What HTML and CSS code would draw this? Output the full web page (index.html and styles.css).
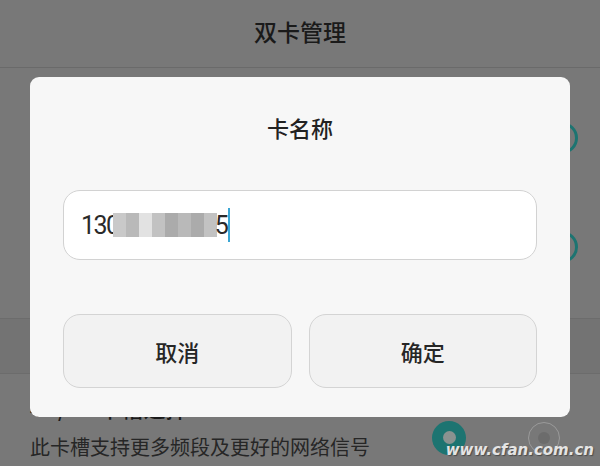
FILE: index.html
```html
<!DOCTYPE html>
<html lang="zh-CN">
<head>
    <meta charset="UTF-8">
    <meta name="viewport" content="width=device-width, initial-scale=1.0">
    <title>双卡管理</title>
    <link rel="stylesheet" href="styles.css">
</head>
<body>
    <div class="page">
        <div class="header">双卡管理</div>

        <div class="row row-first">
            <span class="row-label">卡 1</span>
            <span class="radio-ring"></span>
        </div>
        <div class="row row-second">
            <span class="row-label">卡 2</span>
            <span class="radio-ring"></span>
        </div>

        <div class="section"></div>

        <div class="slot-row">
            <div class="slot-text">
                <div class="slot-title">4G/3G 卡槽选择</div>
                <div class="slot-sub">此卡槽支持更多频段及更好的网络信号</div>
            </div>
            <div class="slot-radios">
                <span class="radio-on"><span class="dot"></span></span>
                <span class="radio-off"><span class="dot"></span></span>
            </div>
        </div>
    </div>

    <div class="dialog">
        <div class="dialog-title">卡名称</div>
        <div class="name-input">
            <span class="digits">130</span><span class="blur"><i class="b4"></i><i class="b1"></i><i class="b2"></i><i class="b5"></i><i class="b3"></i><i class="b1"></i><i class="b3"></i><i class="b5"></i></span><span class="digits">5</span><span class="caret"></span>
        </div>
        <div class="dialog-buttons">
            <button class="btn">取消</button>
            <button class="btn">确定</button>
        </div>
    </div>

    <div class="watermark">www.cfan.com.cn</div>
</body>
</html>
```

FILE: styles.css
```css
* {
    margin: 0;
    padding: 0;
    box-sizing: border-box;
}

html, body {
    width: 600px;
    height: 466px;
    overflow: hidden;
    background: #787878;
    font-family: "Noto Sans CJK SC", "Noto Sans", sans-serif;
    color: #1a1a1a;
}

.page {
    width: 600px;
}

.header {
    height: 68px;
    line-height: 62px;
    text-align: center;
    font-size: 23px;
    font-weight: 500;
    border-bottom: 1px solid #6a6a6a;
}

.row {
    display: flex;
    justify-content: space-between;
    align-items: center;
    padding: 0 22px 0 30px;
}

.row-first {
    height: 140px;
}

.row-second {
    height: 110px;
    align-items: flex-start;
    padding-top: 23px;
}

.row-label {
    font-size: 20px;
}

.radio-ring {
    width: 32px;
    height: 32px;
    border-radius: 50%;
    border: 3px solid #1d7471;
}

.section {
    height: 56px;
    background: #737373;
    border-top: 1px solid #6c6c6c;
    border-bottom: 1px solid #6c6c6c;
}

.slot-row {
    display: flex;
    justify-content: space-between;
    padding: 18px 40px 0 30px;
}

.slot-title {
    font-size: 22px;
    font-weight: 500;
    line-height: 30px;
}

.slot-sub {
    font-size: 20px;
    line-height: 30px;
    margin-top: 10px;
    color: #262626;
}

.slot-radios {
    display: flex;
    align-items: center;
    gap: 62px;
    padding-top: 19px;
    height: 72px;
}

.radio-on {
    width: 34px;
    height: 34px;
    border-radius: 50%;
    background: #1d7471;
    display: flex;
    justify-content: center;
    align-items: center;
}

.radio-on .dot {
    width: 13px;
    height: 13px;
    border-radius: 50%;
    background: #8a9290;
}

.radio-off {
    width: 32px;
    height: 32px;
    border-radius: 50%;
    border: 1px solid #9a9a9a;
    display: flex;
    justify-content: center;
    align-items: center;
}

.radio-off .dot {
    width: 12px;
    height: 12px;
    border-radius: 50%;
    background: #6c6c6c;
}

/* dialog lies over the dimmed page */
.dialog {
    position: absolute;
    left: 30px;
    top: 77px;
    width: 540px;
    height: 340px;
    background: #f7f7f7;
    border-radius: 9px;
    padding: 0 33px;
}

.dialog-title {
    text-align: center;
    font-size: 22px;
    font-weight: 500;
    color: #222;
    height: 113px;
    line-height: 100px;
}

.name-input {
    height: 70px;
    background: #fff;
    border: 1px solid #d2d2d2;
    border-radius: 17px;
    display: flex;
    align-items: center;
    padding-left: 17px;
}

.digits {
    font-family: Roboto, "Noto Sans", sans-serif;
    font-size: 25px;
    letter-spacing: -1.5px;
    color: #2a2a2a;
}

.blur {
    display: inline-flex;
    height: 30px;
    align-items: center;
    margin-left: -6px;
    margin-right: -2px;
}

.blur i {
    display: inline-block;
    width: 13px;
    height: 24px;
}

.blur .b1 { background: #b9b9b9; }
.blur .b2 { background: #e2e2e2; }
.blur .b3 { background: #ababab; }
.blur .b4 { background: #c9c9c9; }
.blur .b5 { background: #c2c2c2; }

.caret {
    width: 2px;
    height: 34px;
    margin-left: 1px;
    background: #3aa6d4;
}

.dialog-buttons {
    display: flex;
    gap: 17px;
    margin-top: 54px;
}

.btn {
    flex: 1;
    height: 74px;
    background: #f2f2f2;
    border: 1px solid #d4d4d4;
    border-radius: 17px;
    font-family: "Noto Sans CJK SC", "Noto Sans", sans-serif;
    font-size: 22px;
    font-weight: 500;
    color: #262626;
}

.watermark {
    position: absolute;
    right: 6px;
    bottom: 7px;
    font-family: "DejaVu Sans", sans-serif;
    font-style: italic;
    font-weight: bold;
    font-size: 15px;
    color: #e4e4e4;
    text-shadow: 1px 1px 1px #4a4a4a;
}
```
